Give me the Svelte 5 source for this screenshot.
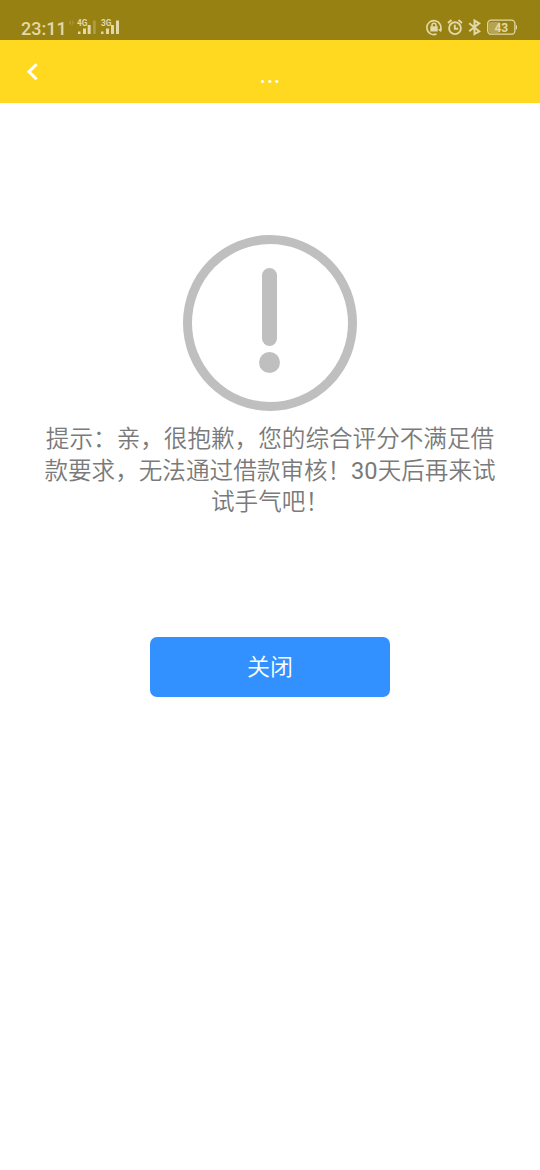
<script lang="ts">
    interface Props {
        time?: string;
        battery?: number;
        title?: string;
        message?: string;
        onclose?: () => void;
    }

    let {
        time = "23:11",
        battery = 43,
        title = "...",
        message = "提示：亲，很抱歉，您的综合评分不满足借款要求，无法通过借款审核！30天后再来试试手气吧！",
        onclose = () => {},
    }: Props = $props();
</script>

<div class="screen">
    <div class="status-bar">
        <span class="time">{time}</span>
        <svg class="signals" width="52" height="20" viewBox="0 0 52 20">
            <!-- data activity -->
            <g fill="#b5a352" opacity="0.6">
                <path d="M0 4.5l2-2.5v6zM5 4.5l-1.8-2.5v6z" />
            </g>
            <g fill="#e3d8a8">
                <text x="8" y="7.5">4G</text>
                <rect x="9" y="13.5" width="2.5" height="2.5" />
                <rect x="14" y="10.5" width="3" height="5.5" />
                <rect x="18.7" y="7" width="3" height="9" />
                <rect x="24" y="2.5" width="2.8" height="13.5" opacity="0.3" />
                <text x="32" y="7.5">3G</text>
                <rect x="32" y="13.5" width="2.5" height="2.5" />
                <rect x="37" y="10.5" width="3" height="5.5" />
                <rect x="42" y="7" width="3" height="9" />
                <rect x="47" y="2.5" width="3" height="13.5" />
            </g>
        </svg>

        <div class="indicators">
            <!-- rotation lock -->
            <svg width="16" height="18" viewBox="0 0 16 18">
                <path
                    d="M10.5 16.1A7 7 0 1 1 14.2 12.6"
                    fill="none"
                    stroke="#e3d8a8"
                    stroke-width="1.6"
                />
                <path d="M16 10.4l-4.1 1.1 3.2 2.7z" fill="#e3d8a8" />
                <rect x="4.3" y="8.3" width="7.4" height="5.2" fill="#e3d8a8" />
                <path
                    d="M6 8.8V7.3a2 2 0 0 1 4 0v1.5"
                    fill="none"
                    stroke="#e3d8a8"
                    stroke-width="1.5"
                />
            </svg>
            <!-- alarm -->
            <svg
                width="16"
                height="18"
                viewBox="0 0 16 18"
                fill="none"
                stroke="#e3d8a8"
                stroke-width="1.9"
            >
                <circle cx="8" cy="10.2" r="5.9" />
                <path d="M7.8 6.8v4h3.4M1 5l3.5-2.9M15 5l-3.5-2.9" />
            </svg>
            <!-- bluetooth -->
            <svg
                width="14"
                height="18"
                viewBox="0 0 14 18"
                fill="none"
                stroke="#e3d8a8"
                stroke-width="2"
            >
                <path d="M1.2 5.3l10 8L6.5 16V2.6l4.7 2.7L1.2 13.3" />
            </svg>
            <svg
                class="battery"
                width="31"
                height="18"
                viewBox="0 0 31 18"
            >
                <rect x="2" y="4" width="11" height="11" rx="2" fill="#b5a352" />
                <rect
                    x="0.7"
                    y="2.2"
                    width="27.2"
                    height="14"
                    rx="3.5"
                    fill="none"
                    stroke="#e3d8a8"
                    stroke-width="1.3"
                />
                <path d="M29.4 7.2v4" stroke="#e3d8a8" stroke-width="1.1" />
                <text x="14.3" y="13.5" text-anchor="middle">{battery}</text>
            </svg>
        </div>
    </div>

    <header class="nav-bar">
        <button class="back" aria-label="返回" onclick={onclose}>
            <svg width="14" height="20" viewBox="0 0 14 20">
                <path
                    d="M11.6 2.3L4 9.8l7.6 7.5"
                    fill="none"
                    stroke="#fff"
                    stroke-width="3"
                />
            </svg>
        </button>
        <h1>{title}</h1>
    </header>

    <main>
        <svg class="notice" width="174" height="176" viewBox="0 0 174 176">
            <ellipse
                cx="87"
                cy="88"
                rx="82.5"
                ry="83.5"
                fill="none"
                stroke="#bfbfbf"
                stroke-width="9"
            />
            <rect x="79" y="33" width="15" height="78" rx="7.5" fill="#bfbfbf" />
            <circle cx="86.5" cy="127.5" r="10.5" fill="#bfbfbf" />
        </svg>
        <p>{message}</p>
        <button class="close-btn" onclick={onclose}>关闭</button>
    </main>
</div>

<style>
    :global(body) {
        margin: 0;
        background: #fff;
    }

    .screen {
        width: 540px;
        min-height: 1170px;
        background: #fff;
        font-family: Roboto, "Noto Sans CJK SC DemiLight", "Noto Sans CJK SC",
            sans-serif;
    }

    .status-bar {
        display: flex;
        align-items: flex-start;
        box-sizing: border-box;
        height: 40px;
        padding: 18px 22px 0 21px;
        background: #988113;
        color: #e3d8a8;
    }

    .time {
        width: 48px;
        font-size: 18px;
        font-weight: 500;
        line-height: 21px;
    }

    .signals text {
        font-size: 8.3px;
        font-weight: 700;
    }

    .indicators {
        display: flex;
        gap: 5px;
        margin-left: auto;
    }

    .battery text {
        font-size: 12px;
        font-weight: 700;
        fill: #e3d8a8;
    }

    .nav-bar {
        display: grid;
        grid-template-columns: 60px 1fr 60px;
        align-items: center;
        height: 63px;
        background: #ffd91f;
        color: #fff;
    }

    .back {
        display: flex;
        padding: 0 0 0 25px;
        border: none;
        background: none;
        cursor: pointer;
    }

    .nav-bar h1 {
        margin: 5px 0 0;
        font-size: 27px;
        font-weight: 400;
        line-height: 32px;
        text-align: center;
    }

    main {
        display: flex;
        flex-direction: column;
        align-items: center;
        padding: 132px 42px 0;
    }

    .notice {
        display: block;
    }

    p {
        width: 456px;
        margin: 13.2px 0 0;
        font-size: 23.6px;
        line-height: 31.5px;
        text-align: center;
        color: #7a7a7a;
    }

    .close-btn {
        width: 240px;
        height: 60px;
        margin-top: 118.2px;
        padding: 0 0 4px;
        border: none;
        border-radius: 7px;
        background: #3391ff;
        color: #fff;
        font-family: inherit;
        font-size: 23px;
        font-weight: 350;
        cursor: pointer;
    }
</style>
